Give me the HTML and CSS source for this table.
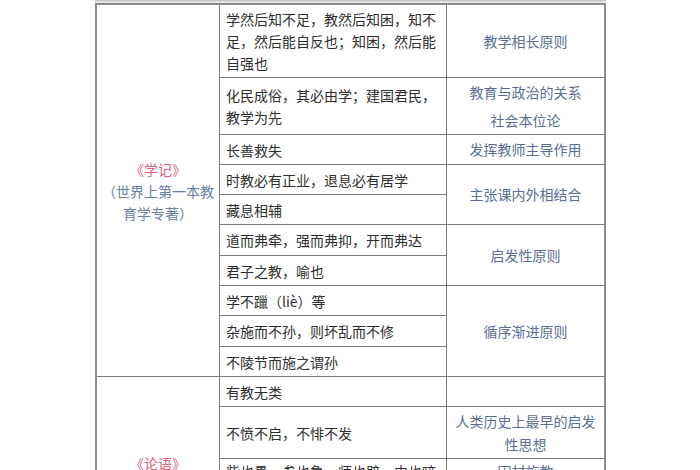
FILE: index.html
```html
<!DOCTYPE html>
<html lang="zh-CN">
<head>
<meta charset="utf-8">
<title>教育名著</title>
<link rel="stylesheet" href="styles.css">
</head>
<body>
<div class="page">
  <div class="prev"></div>
  <div class="table">
    <div class="cell c1 s10 book">
      <div class="title">《学记》</div>
      <div class="note">（世界上第一本教育学专著）</div>
    </div>
    <div class="cell c2">学然后知不足，教然后知困，知不足，然后能自反也；知困，然后能自强也</div>
    <div class="cell c3">教学相长原则</div>

    <div class="cell c2">化民成俗，其必由学；建国君民，教学为先</div>
    <div class="cell c3 tall">教育与政治的关系<br>社会本位论</div>

    <div class="cell c2">长善救失</div>
    <div class="cell c3">发挥教师主导作用</div>

    <div class="cell c2">时教必有正业，退息必有居学</div>
    <div class="cell c3 s2">主张课内外相结合</div>
    <div class="cell c2">藏息相辅</div>

    <div class="cell c2">道而弗牵，强而弗抑，开而弗达</div>
    <div class="cell c3 s2">启发性原则</div>
    <div class="cell c2">君子之教，喻也</div>

    <div class="cell c2">学不躐（liè）等</div>
    <div class="cell c3 s3">循序渐进原则</div>
    <div class="cell c2">杂施而不孙，则坏乱而不修</div>
    <div class="cell c2">不陵节而施之谓孙</div>

    <div class="cell c1 s4 book">
      <div class="title">《论语》</div>
    </div>
    <div class="cell c2">有教无类</div>
    <div class="cell c3"></div>

    <div class="cell c2">不愤不启，不悱不发</div>
    <div class="cell c3">人类历史上最早的启发性思想</div>

    <div class="cell c2 top">柴也愚，参也鲁，师也辟，由也喭</div>
    <div class="cell c3 top">因材施教</div>

    <div class="cell c2">学而不思则罔，思而不学则殆</div>
    <div class="cell c3">学思结合</div>
  </div>
</div>
</body>
</html>
```
FILE: styles.css
```css
html, body {
  margin: 0;
  padding: 0;
  background: #ffffff;
  overflow: hidden;
  height: 470px;
}

.page {
  padding-left: 95px;
  font-family: "Noto Sans CJK SC", "Noto Sans", sans-serif;
  font-size: 14px;
}

.prev {
  width: 511px;
  height: 3px;
  background: #e2e2e2;
  border-top: 1px solid #c8c8c8;
  box-sizing: border-box;
}

.table {
  display: grid;
  width: 511px;
  box-sizing: border-box;
  border-left: 2px solid #8c8c8c;
  border-top: 2px solid #8c8c8c;
  grid-template-columns: 123px 227px 159px;
  grid-template-rows: 73px 57px 30px 30px 30px 31px 30px 30px 31px 30px 30px 52px 26px 64px;
}

.cell {
  box-sizing: border-box;
  border-right: 1px solid #7c7c7c;
  border-bottom: 1px solid #7c7c7c;
  display: flex;
  align-items: center;
  line-height: 22px;
}

.c1 {
  grid-column: 1;
  flex-direction: column;
  justify-content: center;
  text-align: center;
  padding: 0 5px;
}

.c2 {
  grid-column: 2;
  padding: 0 5px 0 6px;
  color: #2e2e2e;
}

.c3 {
  grid-column: 3;
  justify-content: center;
  text-align: center;
  padding: 0 4px;
  color: #5a6e93;
  border-right: 2px solid #8c8c8c;
  line-height: 23px;
}

.s2 { grid-row: span 2; }
.s3 { grid-row: span 3; }
.s4 { grid-row: span 4; }
.s10 { grid-row: span 10; }

.tall { line-height: 28px; }

.top { align-items: flex-start; padding-top: 1px; }

.title {
  color: #e0607a;
}

.note {
  color: #6c7ea0;
}
```
